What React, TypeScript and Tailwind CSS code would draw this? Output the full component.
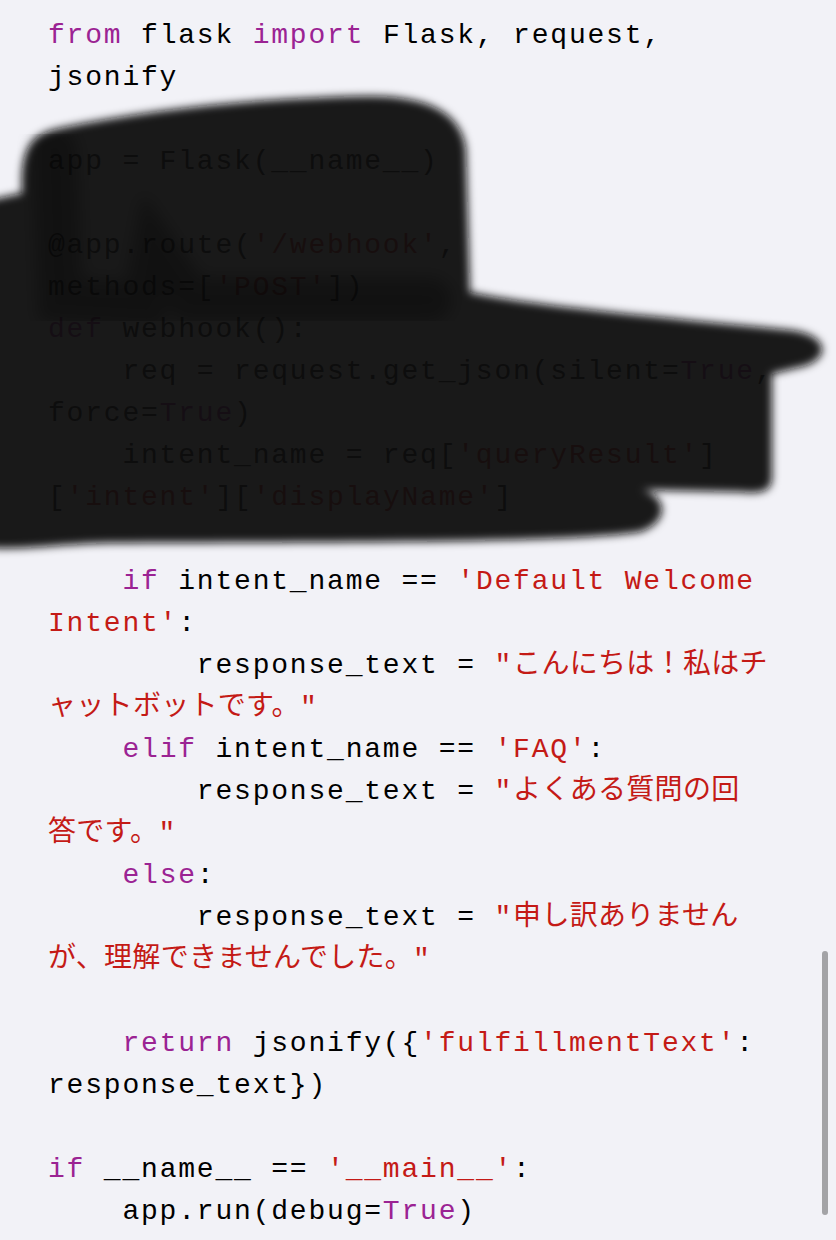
type Seg = [string, "k" | "s" | "j" | "t"];

const lines: Seg[][] = [
  [["from", "k"], [" flask ", "t"], ["import", "k"], [" Flask, request,", "t"]],
  [["jsonify", "t"]],
  [],
  [["app = Flask(__name__)", "t"]],
  [],
  [["@app.route(", "t"], ["'/webhook'", "s"], [",", "t"]],
  [["methods=[", "t"], ["'POST'", "s"], ["])", "t"]],
  [["def", "k"], [" webhook():", "t"]],
  [["    req = request.get_json(silent=", "t"], ["True", "k"], [",", "t"]],
  [["force=", "t"], ["True", "k"], [")", "t"]],
  [["    intent_name = req[", "t"], ["'queryResult'", "s"], ["]", "t"]],
  [["[", "t"], ["'intent'", "s"], ["][", "t"], ["'displayName'", "s"], ["]", "t"]],
  [],
  [["    ", "t"], ["if", "k"], [" intent_name == ", "t"], ["'Default Welcome", "s"]],
  [["Intent'", "s"], [":", "t"]],
  [["        response_text = ", "t"], ['"', "s"], ["こんにちは！私はチ", "j"]],
  [["ャットボットです。", "j"], ['"', "s"]],
  [["    ", "t"], ["elif", "k"], [" intent_name == ", "t"], ["'FAQ'", "s"], [":", "t"]],
  [["        response_text = ", "t"], ['"', "s"], ["よくある質問の回", "j"]],
  [["答です。", "j"], ['"', "s"]],
  [["    ", "t"], ["else", "k"], [":", "t"]],
  [["        response_text = ", "t"], ['"', "s"], ["申し訳ありません", "j"]],
  [["が、理解できませんでした。", "j"], ['"', "s"]],
  [],
  [["    ", "t"], ["return", "k"], [" jsonify({", "t"], ["'fulfillmentText'", "s"], [":", "t"]],
  [["response_text})", "t"]],
  [],
  [["if", "k"], [" __name__ == ", "t"], ["'__main__'", "s"], [":", "t"]],
  [["    app.run(debug=", "t"], ["True", "k"], [")", "t"]],
];

function Token({ seg }: { seg: Seg }) {
  const [text, kind] = seg;
  if (kind === "k") return <span className="text-[#9b2393]">{text}</span>;
  if (kind === "s") return <span className="text-[#c41a16]">{text}</span>;
  if (kind === "j")
    return <span className="text-[#c41a16] tracking-[0.3px]">{text}</span>;
  return <span>{text}</span>;
}

// the black marker scribble over the hidden part of the code
function Scribble() {
  return (
    <svg
      className="absolute left-0 top-0 pointer-events-none"
      width="836"
      height="600"
      viewBox="0 0 836 600"
    >
      <defs>
        <filter id="soft" x="-10%" y="-10%" width="120%" height="120%">
          <feGaussianBlur stdDeviation="4" />
        </filter>
        <filter id="softer" x="-10%" y="-10%" width="120%" height="120%">
          <feGaussianBlur stdDeviation="8" />
        </filter>
      </defs>
      <path
        filter="url(#soft)"
        fill="#101010"
        fillOpacity="0.95"
        d="M -10 200 L 22 193 C 20 150 30 134 60 128 C 150 110 250 98 370 96 C 430 96 462 114 466 150 L 470 292 C 520 304 650 316 790 330 C 832 335 832 362 796 368 L 772 374 L 772 478 C 772 492 760 494 740 492 L 642 490 C 668 496 670 522 640 532 C 560 544 300 542 110 543 C 60 544 25 550 -10 548 Z"
      />
      <path
        filter="url(#softer)"
        fill="none"
        stroke="#000"
        strokeOpacity="0.3"
        strokeWidth="44"
        strokeLinecap="round"
        d="M 55 150 L 60 300 L 145 305 L 155 250 L 190 300 L 430 300"
      />
    </svg>
  );
}

export default function App() {
  return (
    <div className="relative min-h-[1240px] overflow-hidden bg-[#f2f2f7] text-black">
      <div className="pl-12 pt-[15px] [font-family:'Liberation_Mono','Noto_Sans_CJK_JP',monospace] text-[28px] tracking-[1.8px]">
        {lines.map((line, i) => (
          <div key={i} className="h-[42px] leading-[42px] whitespace-pre">
            {line.map((seg, j) => (
              <Token key={j} seg={seg} />
            ))}
          </div>
        ))}
      </div>

      <Scribble />

      {/* scroll indicator */}
      <div className="absolute left-[822px] top-[951px] h-[264px] w-[6px] rounded-full bg-[#a3a3a6]" />
    </div>
  );
}
